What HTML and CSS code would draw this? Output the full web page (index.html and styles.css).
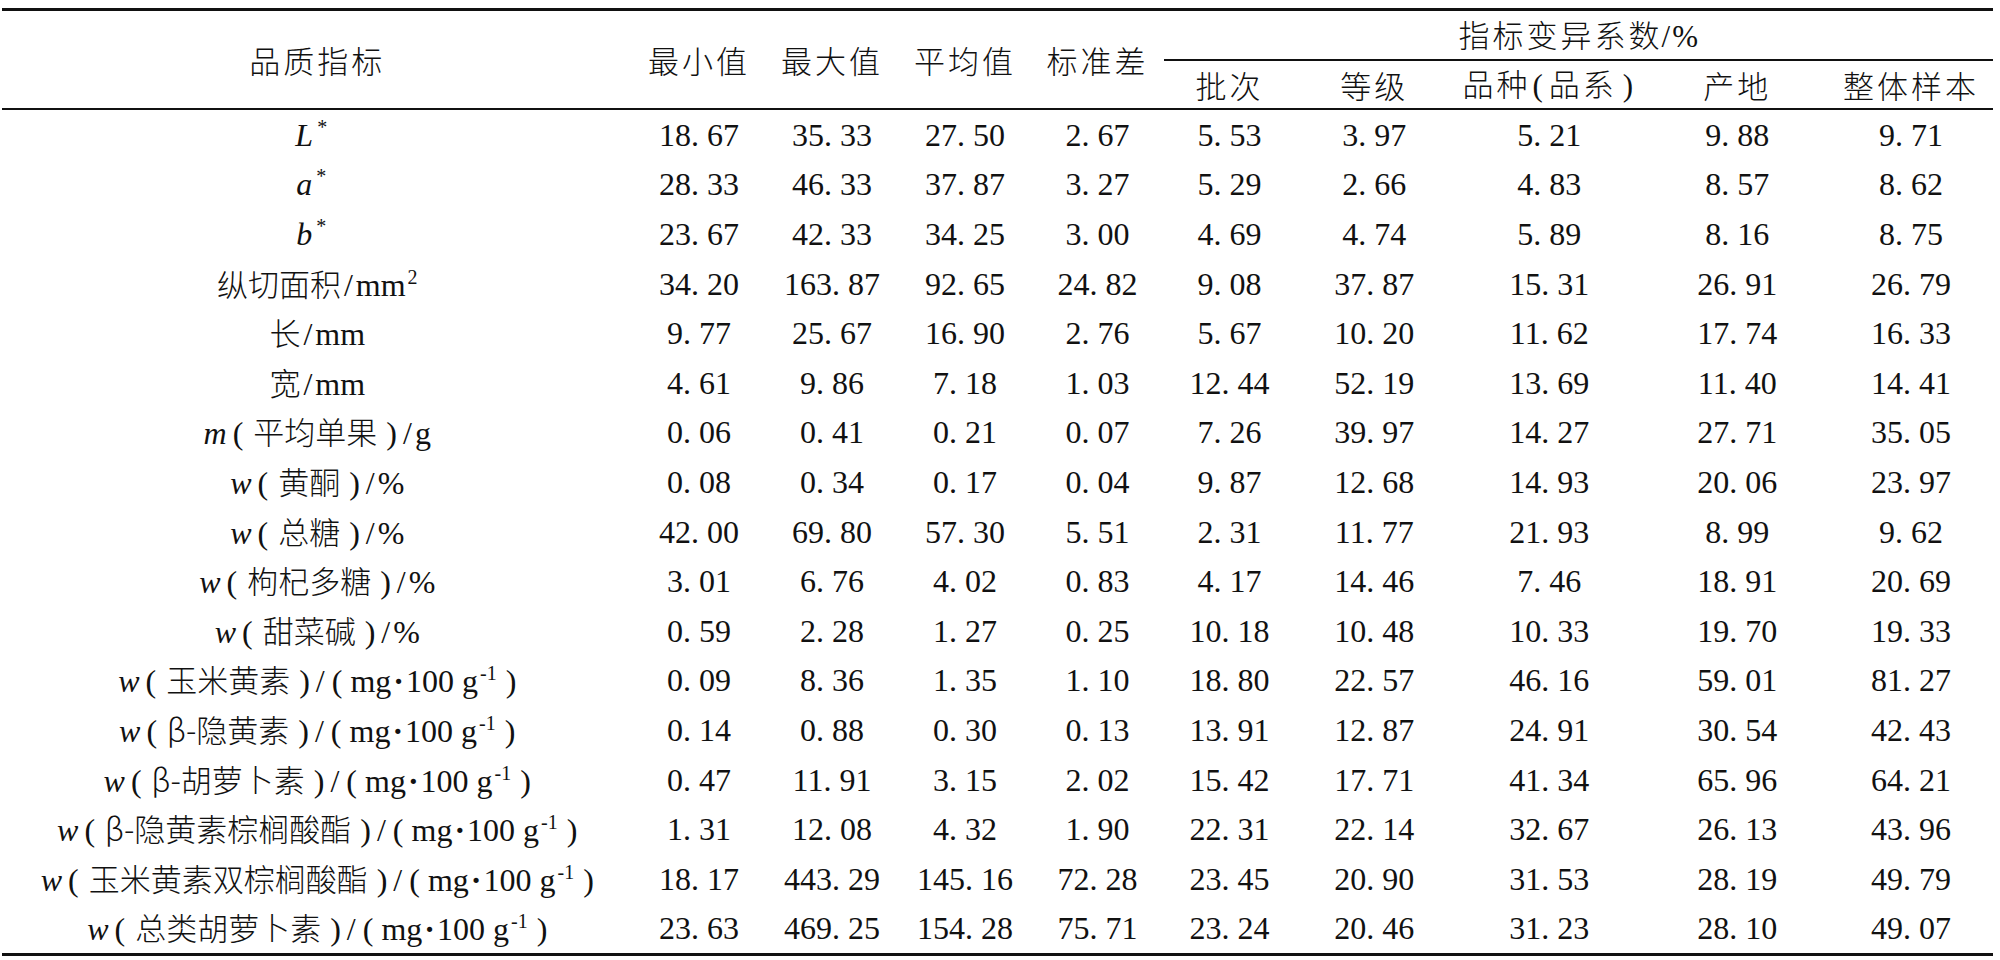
FILE: index.html
```html
<!DOCTYPE html>
<html lang="zh-CN">
<head>
<meta charset="utf-8">
<title>品质指标变异系数</title>
<link rel="stylesheet" href="styles.css">
</head>
<body>
<div class="page">
<table class="data">
<colgroup>
<col class="c0"><col class="cn"><col class="cn"><col class="cn"><col class="cn2"><col class="cn2"><col class="c6"><col class="c7"><col class="c8"><col class="c9">
</colgroup>
<thead>
<tr class="h1">
<th rowspan="2" class="span2">品质指标</th>
<th rowspan="2" class="span2">最小值</th>
<th rowspan="2" class="span2">最大值</th>
<th rowspan="2" class="span2">平均值</th>
<th rowspan="2" class="span2">标准差</th>
<th colspan="5" class="grp">指标变异系数<span class="hs">/</span><span class="pc">%</span></th>
</tr>
<tr class="h2">
<th>批次</th>
<th>等级</th>
<th>品种<span class="ho">(</span>品系<span class="hc">)</span></th>
<th>产地</th>
<th>整体样本</th>
</tr>
</thead>
<tbody>
<tr><td class="lbl sym"><i>L</i><sup>*</sup></td><td>18. 67</td><td>35. 33</td><td>27. 50</td><td>2. 67</td><td>5. 53</td><td>3. 97</td><td>5. 21</td><td>9. 88</td><td>9. 71</td></tr>
<tr><td class="lbl sym"><i>a</i><sup>*</sup></td><td>28. 33</td><td>46. 33</td><td>37. 87</td><td>3. 27</td><td>5. 29</td><td>2. 66</td><td>4. 83</td><td>8. 57</td><td>8. 62</td></tr>
<tr><td class="lbl sym"><i>b</i><sup>*</sup></td><td>23. 67</td><td>42. 33</td><td>34. 25</td><td>3. 00</td><td>4. 69</td><td>4. 74</td><td>5. 89</td><td>8. 16</td><td>8. 75</td></tr>
<tr><td class="lbl"><span class="zh">纵切面积</span><span class="s">/</span>mm<sup>2</sup></td><td>34. 20</td><td>163. 87</td><td>92. 65</td><td>24. 82</td><td>9. 08</td><td>37. 87</td><td>15. 31</td><td>26. 91</td><td>26. 79</td></tr>
<tr><td class="lbl"><span class="zh">长</span><span class="s">/</span>mm</td><td>9. 77</td><td>25. 67</td><td>16. 90</td><td>2. 76</td><td>5. 67</td><td>10. 20</td><td>11. 62</td><td>17. 74</td><td>16. 33</td></tr>
<tr><td class="lbl"><span class="zh">宽</span><span class="s">/</span>mm</td><td>4. 61</td><td>9. 86</td><td>7. 18</td><td>1. 03</td><td>12. 44</td><td>52. 19</td><td>13. 69</td><td>11. 40</td><td>14. 41</td></tr>
<tr><td class="lbl"><i>m</i><span class="o">(</span><span class="zh">平均单果</span><span class="c">)</span><span class="s">/</span>g</td><td>0. 06</td><td>0. 41</td><td>0. 21</td><td>0. 07</td><td>7. 26</td><td>39. 97</td><td>14. 27</td><td>27. 71</td><td>35. 05</td></tr>
<tr><td class="lbl"><i>w</i><span class="o">(</span><span class="zh">黄酮</span><span class="c">)</span><span class="s">/</span>%</td><td>0. 08</td><td>0. 34</td><td>0. 17</td><td>0. 04</td><td>9. 87</td><td>12. 68</td><td>14. 93</td><td>20. 06</td><td>23. 97</td></tr>
<tr><td class="lbl"><i>w</i><span class="o">(</span><span class="zh">总糖</span><span class="c">)</span><span class="s">/</span>%</td><td>42. 00</td><td>69. 80</td><td>57. 30</td><td>5. 51</td><td>2. 31</td><td>11. 77</td><td>21. 93</td><td>8. 99</td><td>9. 62</td></tr>
<tr><td class="lbl"><i>w</i><span class="o">(</span><span class="zh">枸杞多糖</span><span class="c">)</span><span class="s">/</span>%</td><td>3. 01</td><td>6. 76</td><td>4. 02</td><td>0. 83</td><td>4. 17</td><td>14. 46</td><td>7. 46</td><td>18. 91</td><td>20. 69</td></tr>
<tr><td class="lbl"><i>w</i><span class="o">(</span><span class="zh">甜菜碱</span><span class="c">)</span><span class="s">/</span>%</td><td>0. 59</td><td>2. 28</td><td>1. 27</td><td>0. 25</td><td>10. 18</td><td>10. 48</td><td>10. 33</td><td>19. 70</td><td>19. 33</td></tr>
<tr><td class="lbl"><i>w</i><span class="o">(</span><span class="zh">玉米黄素</span><span class="c">)</span><span class="s">/</span><span class="o2">(</span>mg<span class="dot">·</span>100 g<sup>-1</sup><span class="c2">)</span></td><td>0. 09</td><td>8. 36</td><td>1. 35</td><td>1. 10</td><td>18. 80</td><td>22. 57</td><td>46. 16</td><td>59. 01</td><td>81. 27</td></tr>
<tr><td class="lbl"><i>w</i><span class="o">(</span><span class="zh">β-隐黄素</span><span class="c">)</span><span class="s">/</span><span class="o2">(</span>mg<span class="dot">·</span>100 g<sup>-1</sup><span class="c2">)</span></td><td>0. 14</td><td>0. 88</td><td>0. 30</td><td>0. 13</td><td>13. 91</td><td>12. 87</td><td>24. 91</td><td>30. 54</td><td>42. 43</td></tr>
<tr><td class="lbl"><i>w</i><span class="o">(</span><span class="zh">β-胡萝卜素</span><span class="c">)</span><span class="s">/</span><span class="o2">(</span>mg<span class="dot">·</span>100 g<sup>-1</sup><span class="c2">)</span></td><td>0. 47</td><td>11. 91</td><td>3. 15</td><td>2. 02</td><td>15. 42</td><td>17. 71</td><td>41. 34</td><td>65. 96</td><td>64. 21</td></tr>
<tr><td class="lbl"><i>w</i><span class="o">(</span><span class="zh">β-隐黄素棕榈酸酯</span><span class="c">)</span><span class="s">/</span><span class="o2">(</span>mg<span class="dot">·</span>100 g<sup>-1</sup><span class="c2">)</span></td><td>1. 31</td><td>12. 08</td><td>4. 32</td><td>1. 90</td><td>22. 31</td><td>22. 14</td><td>32. 67</td><td>26. 13</td><td>43. 96</td></tr>
<tr><td class="lbl"><i>w</i><span class="o">(</span><span class="zh">玉米黄素双棕榈酸酯</span><span class="c">)</span><span class="s">/</span><span class="o2">(</span>mg<span class="dot">·</span>100 g<sup>-1</sup><span class="c2">)</span></td><td>18. 17</td><td>443. 29</td><td>145. 16</td><td>72. 28</td><td>23. 45</td><td>20. 90</td><td>31. 53</td><td>28. 19</td><td>49. 79</td></tr>
<tr class="last"><td class="lbl"><i>w</i><span class="o">(</span><span class="zh">总类胡萝卜素</span><span class="c">)</span><span class="s">/</span><span class="o2">(</span>mg<span class="dot">·</span>100 g<sup>-1</sup><span class="c2">)</span></td><td>23. 63</td><td>469. 25</td><td>154. 28</td><td>75. 71</td><td>23. 24</td><td>20. 46</td><td>31. 23</td><td>28. 10</td><td>49. 07</td></tr>
</tbody>
</table>
</div>
</body>
</html>
```

FILE: styles.css
```css
html, body {
  margin: 0;
  padding: 0;
  background: #ffffff;
}

.page {
  padding: 8px 0 0 2px;
}

.data {
  border-collapse: separate;
  border-spacing: 0;
  table-layout: fixed;
  width: 1991px;
  color: #111111;
  font-family: "Liberation Serif", "Noto Sans CJK SC", serif;
  font-size: 32px;
}

.c0 { width: 630.5px; }
.cn { width: 133px; }
.cn2 { width: 132px; }
.c6 { width: 157.5px; }
.c7 { width: 192.5px; }
.c8 { width: 183.5px; }
.c9 { width: 164px; }

.data th,
.data td {
  box-sizing: border-box;
  padding: 0;
  text-align: center;
  vertical-align: middle;
  white-space: nowrap;
  font-weight: 400;
}

.data th {
  font-family: "Noto Sans CJK SC", sans-serif;
  font-weight: 300;
  font-size: 31px;
  letter-spacing: 3px;
  line-height: 40px;
}

.h1 th {
  border-top: 3px solid #111111;
  height: 53px;
}

.h1 th.span2 {
  border-bottom: 2px solid #111111;
}

.h1 th.grp {
  border-bottom: 2px solid #111111;
  padding-top: 1px;
}

.h2 th {
  border-bottom: 2px solid #111111;
  height: 49px;
}

.hs,
.pc {
  font-family: "Liberation Serif", serif;
  letter-spacing: 0;
}

.hs {
  margin: 0 2px 0 -1px;
}

.ho,
.hc {
  font-family: "Liberation Serif", serif;
  letter-spacing: 0;
}

.ho { margin: 0 6px 0 2px; }
.hc { margin: 0 3px 0 6px; }

.data td {
  height: 49.6px;
  line-height: 40px;
}

.data tr.last td {
  height: 52.6px;
  border-bottom: 3px solid #111111;
}

.lbl {
  font-size: 32px;
}

.lbl .zh {
  font-family: "Noto Sans CJK SC", sans-serif;
  font-weight: 300;
  font-size: 31px;
}

.lbl i {
  font-style: italic;
}

.lbl sup {
  font-size: 20px;
  line-height: 0;
  vertical-align: 12px;
  margin-left: 2px;
}

.sym {
  padding-right: 12px !important;
}

.sym sup {
  margin-left: 4px;
}

.o { margin: 0 10px 0 6px; }
.c { margin: 0 3px 0 9px; }
.o2 { margin: 0 8px 0 4px; }
.c2 { margin: 0 0 0 9px; }
.s { margin: 0 3px; }
.dot { margin: 0 2px; font-weight: 700; }
```
